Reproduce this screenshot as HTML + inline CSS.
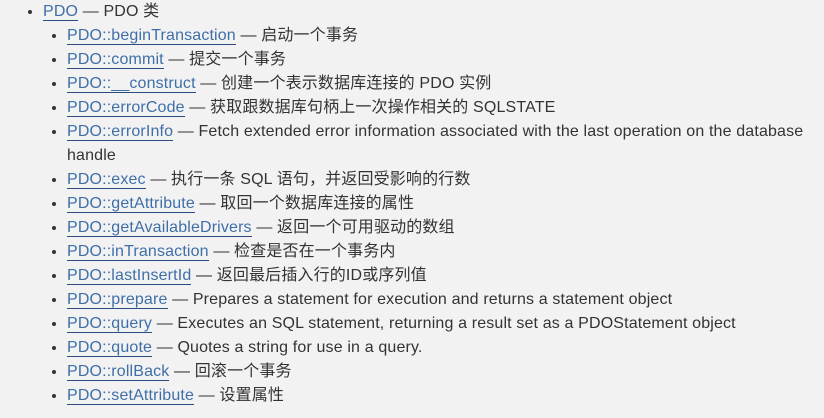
<!DOCTYPE html>
<html><head><meta charset="utf-8"><style>
html,body{margin:0;padding:0;background:#f2f2f2;width:824px;height:418px;overflow:hidden}
body{font-family:"Liberation Sans","Noto Sans CJK SC",sans-serif;font-size:16px;letter-spacing:0.15px;color:#333;line-height:24px}
ul{margin:0;padding:0;list-style:disc}
ul.top{padding-left:43px;margin-top:0}
ul.sub{padding-left:24px}
li{white-space:nowrap}
a{color:#3f6fa8;text-decoration:none;border-bottom:1px solid #2b4c7e}
</style></head><body>
<ul class="top"><li><a>PDO</a> — PDO 类
<ul class="sub">
<li><a>PDO::beginTransaction</a> — 启动一个事务</li>
<li><a>PDO::commit</a> — 提交一个事务</li>
<li><a>PDO::__construct</a> — 创建一个表示数据库连接的 PDO 实例</li>
<li><a>PDO::errorCode</a> — 获取跟数据库句柄上一次操作相关的 SQLSTATE</li>
<li><a>PDO::errorInfo</a> — Fetch extended error information associated with the last operation on the database<br>handle</li>
<li><a>PDO::exec</a> — 执行一条 SQL 语句，并返回受影响的行数</li>
<li><a>PDO::getAttribute</a> — 取回一个数据库连接的属性</li>
<li><a>PDO::getAvailableDrivers</a> — 返回一个可用驱动的数组</li>
<li><a>PDO::inTransaction</a> — 检查是否在一个事务内</li>
<li><a>PDO::lastInsertId</a> — 返回最后插入行的ID或序列值</li>
<li><a>PDO::prepare</a> — Prepares a statement for execution and returns a statement object</li>
<li><a>PDO::query</a> — Executes an SQL statement, returning a result set as a PDOStatement object</li>
<li><a>PDO::quote</a> — Quotes a string for use in a query.</li>
<li><a>PDO::rollBack</a> — 回滚一个事务</li>
<li><a>PDO::setAttribute</a> — 设置属性</li>
</ul></li></ul>
</body></html>
